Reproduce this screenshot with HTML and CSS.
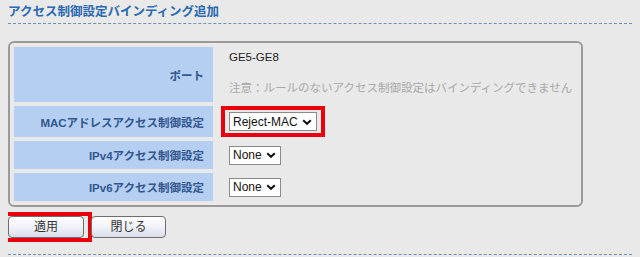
FILE: index.html
```html
<!DOCTYPE html>
<html lang="ja">

<head>
    <meta charset="utf-8"/>
    <title>アクセス制御設定バインディング追加</title>
    <link rel="stylesheet" href="styles.css">
</head>

<body>
<div class="title">アクセス制御設定バインディング追加</div>

<div class="panel">
    <table class="form">
        <tr class="tall">
            <th>ポート</th>
            <td>
                <div class="port">GE5-GE8</div>
                <div class="note">注意：ルールのないアクセス制御設定はバインディングできません</div>
            </td>
        </tr>
        <tr>
            <th>MACアドレスアクセス制御設定</th>
            <td>
                <span class="mark markSel">
                    <span class="sel">Reject-MAC <svg class="chev" viewBox="0 0 10 6"><path d="M1.2 1.2 L5 4.8 L8.8 1.2"/></svg></span>
                </span>
            </td>
        </tr>
        <tr>
            <th>IPv4アクセス制御設定</th>
            <td><span class="sel">None <svg class="chev" viewBox="0 0 10 6"><path d="M1.2 1.2 L5 4.8 L8.8 1.2"/></svg></span></td>
        </tr>
        <tr>
            <th>IPv6アクセス制御設定</th>
            <td><span class="sel">None <svg class="chev" viewBox="0 0 10 6"><path d="M1.2 1.2 L5 4.8 L8.8 1.2"/></svg></span></td>
        </tr>
    </table>
</div>

<div class="buttons">
    <span class="mark markBtn"><span class="btn">適用</span></span>
    <span class="btn btnClose">閉じる</span>
</div>

<div class="line"></div>
</body>
</html>
```

FILE: styles.css
```css
* {
    box-sizing: border-box;
}

body {
    margin: 0 8px;
    background-color: #e9e9e9;
    font-family: "Liberation Sans", "Noto Sans CJK JP", sans-serif;
    font-size: 11.5px;
    color: #333;
}

.title {
    padding-top: 3px;
    padding-bottom: 2px;
    line-height: 18px;
    font-size: 12.5px;
    font-weight: bold;
    color: #2a6ab2;
    border-bottom: 1px dashed #6f8fb8;
}

.panel {
    width: 575px;
    margin-top: 17px;
    border: 2px solid #9a9a9a;
    border-radius: 6px;
}

.form {
    width: 100%;
    border-spacing: 4px;
}

.form th {
    width: 199px;
    height: 28px;
    padding: 0 9px 0 0;
    text-align: right;
    vertical-align: middle;
    background-color: #b5cff3;
    color: #32568e;
    font-weight: bold;
}

.form td {
    padding: 0 0 0 12px;
    vertical-align: middle;
}

.form .tall th {
    height: 55px;
}

.form .tall td {
    vertical-align: top;
}

.port {
    line-height: 20px;
    color: #222;
}

.note {
    margin-top: 11px;
    line-height: 20px;
    color: #a8a8a8;
}

.sel {
    display: inline-flex;
    align-items: center;
    height: 19px;
    padding: 0 4px 0 3px;
    border: 1px solid #8a8a8a;
    background-color: #fff;
    color: #111;
    font-size: 12px;
    white-space: nowrap;
}

.chev {
    width: 10px;
    height: 6px;
    margin-left: 4px;
}

.chev path {
    fill: none;
    stroke: #111;
    stroke-width: 2;
}

.mark {
    display: inline-block;
    border: 4px solid #e8000b;
}

.markSel {
    margin-left: -8px;
    padding: 2px 4px;
}

.buttons {
    display: flex;
    align-items: center;
    margin-top: 5px;
}

.markBtn {
    margin-left: -8px;
    padding: 0 4px;
}

.btn {
    display: block;
    width: 76px;
    height: 22px;
    line-height: 20px;
    text-align: center;
    border: 1px solid #6e6e6e;
    border-radius: 4px;
    background: linear-gradient(#ffffff, #f1f2f8 50%, #d9dcea);
    color: #333;
    font-size: 12px;
}

.btnClose {
    margin-left: -1px;
    width: 75px;
}

.line {
    margin-top: 12px;
    border-bottom: 1px dashed #6f8fb8;
}
```
